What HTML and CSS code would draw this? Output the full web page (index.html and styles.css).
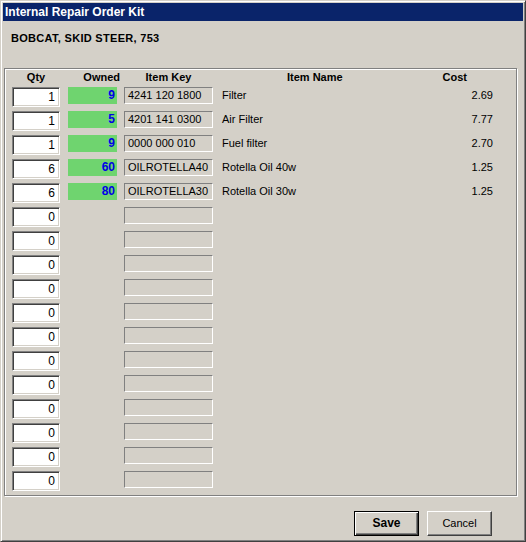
FILE: index.html
```html
<!DOCTYPE html>
<html>
<head>
<meta charset="utf-8">
<title>Internal Repair Order Kit</title>
<link rel="stylesheet" href="styles.css">
</head>
<body>
<div class="window">
  <div class="titlebar">Internal Repair Order Kit</div>
  <div class="content">
    <div class="heading">BOBCAT, SKID STEER, 753</div>
    <div class="group">
      <div class="grid header">
        <div class="h-qty">Qty</div>
        <div class="h-owned">Owned</div>
        <div class="h-key">Item Key</div>
        <div class="h-name">Item Name</div>
        <div class="h-cost">Cost</div>
      </div>
      <div class="grid row"><div class="cell"><div class="qty">1</div></div><div class="cell"><div class="owned">9</div></div><div class="cell"><div class="key">4241 120 1800</div></div><div class="name">Filter</div><div class="cost">2.69</div></div>
      <div class="grid row"><div class="cell"><div class="qty">1</div></div><div class="cell"><div class="owned">5</div></div><div class="cell"><div class="key">4201 141 0300</div></div><div class="name">Air Filter</div><div class="cost">7.77</div></div>
      <div class="grid row"><div class="cell"><div class="qty">1</div></div><div class="cell"><div class="owned">9</div></div><div class="cell"><div class="key">0000 000 010</div></div><div class="name">Fuel filter</div><div class="cost">2.70</div></div>
      <div class="grid row"><div class="cell"><div class="qty">6</div></div><div class="cell"><div class="owned">60</div></div><div class="cell"><div class="key">OILROTELLA40</div></div><div class="name">Rotella Oil 40w</div><div class="cost">1.25</div></div>
      <div class="grid row"><div class="cell"><div class="qty">6</div></div><div class="cell"><div class="owned">80</div></div><div class="cell"><div class="key">OILROTELLA30</div></div><div class="name">Rotella Oil 30w</div><div class="cost">1.25</div></div>
      <div class="grid row"><div class="cell"><div class="qty">0</div></div><div class="cell"></div><div class="cell"><div class="key"></div></div><div class="name"></div><div class="cost"></div></div>
      <div class="grid row"><div class="cell"><div class="qty">0</div></div><div class="cell"></div><div class="cell"><div class="key"></div></div><div class="name"></div><div class="cost"></div></div>
      <div class="grid row"><div class="cell"><div class="qty">0</div></div><div class="cell"></div><div class="cell"><div class="key"></div></div><div class="name"></div><div class="cost"></div></div>
      <div class="grid row"><div class="cell"><div class="qty">0</div></div><div class="cell"></div><div class="cell"><div class="key"></div></div><div class="name"></div><div class="cost"></div></div>
      <div class="grid row"><div class="cell"><div class="qty">0</div></div><div class="cell"></div><div class="cell"><div class="key"></div></div><div class="name"></div><div class="cost"></div></div>
      <div class="grid row"><div class="cell"><div class="qty">0</div></div><div class="cell"></div><div class="cell"><div class="key"></div></div><div class="name"></div><div class="cost"></div></div>
      <div class="grid row"><div class="cell"><div class="qty">0</div></div><div class="cell"></div><div class="cell"><div class="key"></div></div><div class="name"></div><div class="cost"></div></div>
      <div class="grid row"><div class="cell"><div class="qty">0</div></div><div class="cell"></div><div class="cell"><div class="key"></div></div><div class="name"></div><div class="cost"></div></div>
      <div class="grid row"><div class="cell"><div class="qty">0</div></div><div class="cell"></div><div class="cell"><div class="key"></div></div><div class="name"></div><div class="cost"></div></div>
      <div class="grid row"><div class="cell"><div class="qty">0</div></div><div class="cell"></div><div class="cell"><div class="key"></div></div><div class="name"></div><div class="cost"></div></div>
      <div class="grid row"><div class="cell"><div class="qty">0</div></div><div class="cell"></div><div class="cell"><div class="key"></div></div><div class="name"></div><div class="cost"></div></div>
      <div class="grid row"><div class="cell"><div class="qty">0</div></div><div class="cell"></div><div class="cell"><div class="key"></div></div><div class="name"></div><div class="cost"></div></div>
    </div>
    <div class="buttons">
      <div class="btn default">Save</div>
      <div class="btn">Cancel</div>
    </div>
  </div>
</div>
</body>
</html>
```

FILE: styles.css
```css
* { box-sizing: border-box; }
html, body { margin: 0; padding: 0; background: #d4d0c8; }
body {
  font-family: "Liberation Sans", Arial, sans-serif;
  font-size: 11px;
  color: #000;
}
.window {
  width: 526px;
  height: 542px;
  background: #d4d0c8;
  border: 1px solid;
  border-color: #d4d0c8 #404040 #404040 #d4d0c8;
  box-shadow: inset 1px 1px 0 #fff, inset -1px -1px 0 #808080;
  padding: 2px;
  display: flex;
  flex-direction: column;
}
.titlebar {
  height: 18px;
  background: #0a246a;
  color: #fff;
  font-weight: bold;
  font-size: 12px;
  line-height: 18px;
  padding-left: 2px;
  flex: none;
}
.content {
  flex: 1;
  display: flex;
  flex-direction: column;
}
.heading {
  font-weight: bold;
  font-size: 11px;
  line-height: 13px;
  padding: 11px 0 0 8px;
  letter-spacing: 0.3px;
}
.group {
  margin: 23px 0 0 1px;
  width: 513px;
  height: 428px;
  border: 1px solid #808080;
  box-shadow: 1px 1px 0 #fff, inset 1px 1px 0 #fff;
  padding: 2px 0 0 7px;
}
.grid {
  display: grid;
  grid-template-columns: 56px 56px 98px 200px 71px;
}
.header {
  height: 16px;
  font-weight: bold;
  line-height: 13px;
}
.h-qty { width: 48px; text-align: center; }
.h-owned { text-align: right; padding-right: 4px; }
.h-key { width: 89px; text-align: center; }
.h-name { padding-left: 65px; }
.h-cost { text-align: right; padding-right: 26px; }
.row {
  height: 24px;
  align-items: start;
}
.qty {
  width: 48px;
  height: 20px;
  background: #fff;
  border: 1px solid;
  border-color: #808080 #fff #fff #808080;
  box-shadow: inset 1px 1px 0 #404040, inset -1px -1px 0 #d4d0c8;
  text-align: right;
  padding-right: 4px;
  font-size: 12px;
  line-height: 18px;
}
.owned {
  width: 49px;
  height: 17px;
  background: #6fd46f;
  color: #0000e6;
  font-weight: bold;
  font-size: 12px;
  text-align: right;
  padding-right: 2px;
  line-height: 17px;
}
.key {
  width: 89px;
  height: 17px;
  border: 1px solid;
  border-color: #808080 #fff #fff #808080;
  padding-left: 3px;
  font-size: 11px;
  line-height: 15px;
  white-space: nowrap;
}
.name {
  line-height: 17px;
}
.cost {
  text-align: right;
  line-height: 17px;
}
.buttons {
  display: flex;
  justify-content: flex-end;
  gap: 8px;
  margin-top: 15px;
  padding-right: 31px;
}
.btn {
  width: 65px;
  height: 25px;
  background: #d4d0c8;
  border: 1px solid;
  border-color: #fff #404040 #404040 #fff;
  box-shadow: inset -1px -1px 0 #808080;
  text-align: center;
  line-height: 23px;
  font-size: 11px;
}
.btn.default {
  border: 1px solid #000;
  box-shadow: inset 1px 1px 0 #fff, inset -1px -1px 0 #404040, inset -2px -2px 0 #808080;
  font-weight: bold;
  font-size: 12px;
}
```
